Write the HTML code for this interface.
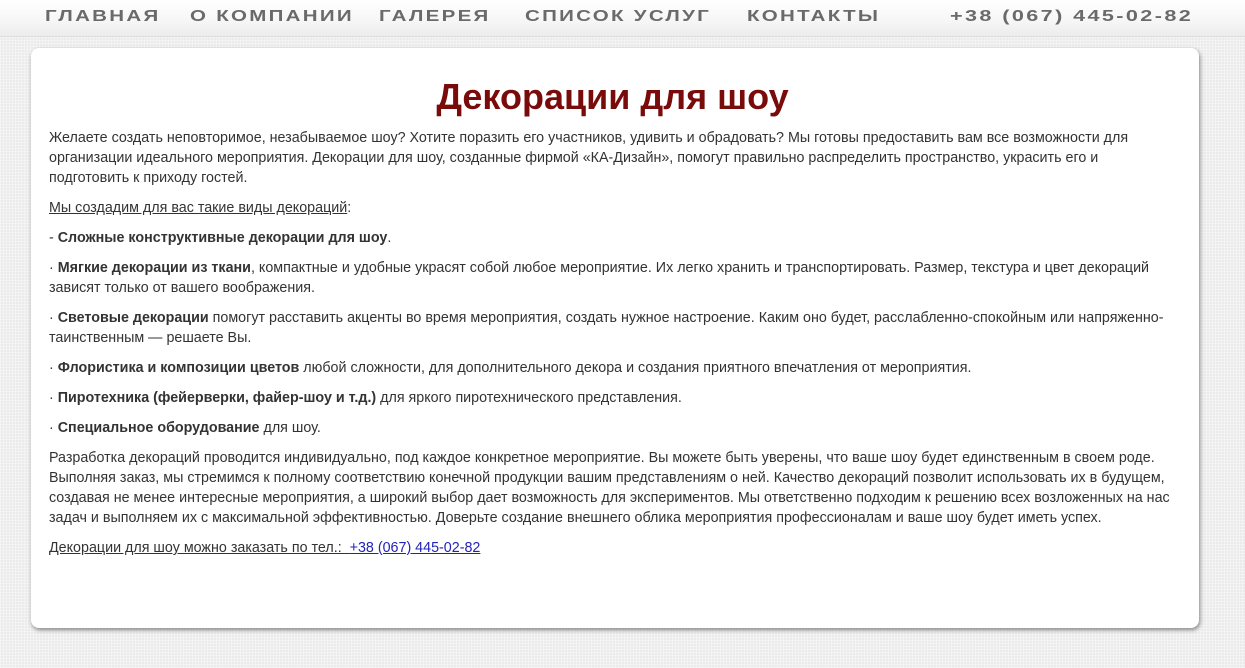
<!DOCTYPE html>
<html><head><meta charset="utf-8"><style>
html,body{margin:0;padding:0}
body{width:1245px;height:668px;overflow:hidden;background:#ebebeb;background-image:repeating-linear-gradient(0deg,rgba(255,255,255,.35) 0 1px,transparent 1px 3px),repeating-linear-gradient(90deg,rgba(255,255,255,.35) 0 1px,transparent 1px 3px);font-family:"Liberation Sans",Arial,sans-serif;position:relative}
.nav{position:absolute;left:0;top:0;width:1245px;height:36px;background:linear-gradient(#fff,#f6f6f6 60%,#ececec);border-bottom:1px solid #ddd}
.nav span{position:absolute;top:6px;font-size:18px;font-weight:bold;color:#6a6a6a;letter-spacing:2px;transform-origin:0 50%;transform:scale(1.14,.85);white-space:nowrap}
.card{position:absolute;left:31px;top:48px;width:1168px;height:580px;background:#fff;border-radius:8px;box-shadow:1px 2px 4px rgba(0,0,0,.45)}
h1{position:absolute;left:-10px;width:100%;top:76px;margin:0;text-align:center;font-size:36px;font-weight:bold;color:#7a0b0b}
.txt{position:absolute;left:49px;top:128px;width:1132px;font-size:14.3px;line-height:20px;color:#333}
.txt p{margin:0 0 10px}
u{text-decoration:underline}
a{color:#2222bb}
</style></head><body>
<div class="nav">
<span style="left:45px">ГЛАВНАЯ</span>
<span style="left:190px">О КОМПАНИИ</span>
<span style="left:379px">ГАЛЕРЕЯ</span>
<span style="left:525px">СПИСОК УСЛУГ</span>
<span style="left:747px">КОНТАКТЫ</span>
<span style="left:950px;transform:scale(1.2,.85)">+38 (067) 445-02-82</span>
</div>
<div class="card"></div>
<h1>Декорации для шоу</h1>
<div class="txt">
<p>Желаете создать неповторимое, незабываемое шоу? Хотите поразить его участников, удивить и обрадовать? Мы готовы предоставить вам все возможности для организации идеального мероприятия. Декорации для шоу, созданные фирмой «КА-Дизайн», помогут правильно распределить пространство, украсить его и подготовить к приходу гостей.</p>
<p><u>Мы создадим для вас такие виды декораций</u>:</p>
<p>- <b>Сложные конструктивные декорации для шоу</b>.</p>
<p>· <b>Мягкие декорации из ткани</b>, компактные и удобные украсят собой любое мероприятие. Их легко хранить и транспортировать. Размер, текстура и цвет декораций зависят только от вашего воображения.</p>
<p>· <b>Световые декорации</b> помогут расставить акценты во время мероприятия, создать нужное настроение. Каким оно будет, расслабленно-спокойным или напряженно-таинственным — решаете Вы.</p>
<p>· <b>Флористика и композиции цветов</b> любой сложности, для дополнительного декора и создания приятного впечатления от мероприятия.</p>
<p>· <b>Пиротехника (фейерверки, файер-шоу и т.д.)</b> для яркого пиротехнического представления.</p>
<p>· <b>Специальное оборудование</b> для шоу.</p>
<p>Разработка декораций проводится индивидуально, под каждое конкретное мероприятие. Вы можете быть уверены, что ваше шоу будет единственным в своем роде. Выполняя заказ, мы стремимся к полному соответствию конечной продукции вашим представлениям о ней. Качество декораций позволит использовать их в будущем, создавая не менее интересные мероприятия, а широкий выбор дает возможность для экспериментов. Мы ответственно подходим к решению всех возложенных на нас задач и выполняем их с максимальной эффективностью. Доверьте создание внешнего облика мероприятия профессионалам и ваше шоу будет иметь успех.</p>
<p><u>Декорации для шоу можно заказать по тел.:&nbsp;&nbsp;</u><a><u>+38 (067) 445-02-82</u></a></p>
</div>
</body></html>
